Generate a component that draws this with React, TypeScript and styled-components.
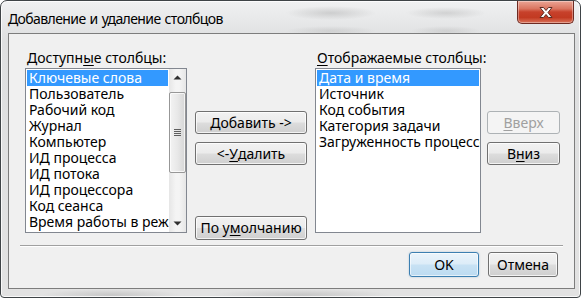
import React from 'react';
import styled, { createGlobalStyle, css } from 'styled-components';

const GlobalStyle = createGlobalStyle`
  html, body {
    margin: 0;
    padding: 0;
    background: #ffffff;
  }
  body {
    font-family: "Noto Sans", "DejaVu Sans", sans-serif;
    color: #000;
  }
`;

const Window = styled.div`
  box-sizing: border-box;
  width: 581px;
  height: 298px;
  border: 1px solid #3f4447;
  border-radius: 7px 7px 4px 4px;
  display: flex;
  flex-direction: column;
  background:
    radial-gradient(ellipse 45px 7px at 330px 12px, rgba(150,150,150,0.35), transparent),
    radial-gradient(ellipse 40px 6px at 445px 12px, rgba(150,150,150,0.3), transparent),
    radial-gradient(ellipse 45px 5px at 330px 30px, rgba(150,150,150,0.25), transparent),
    radial-gradient(ellipse 35px 5px at 445px 30px, rgba(150,150,150,0.25), transparent),
    radial-gradient(ellipse 70px 6px at 110px 294px, rgba(120,120,120,0.25), transparent),
    radial-gradient(ellipse 90px 6px at 300px 294px, rgba(120,120,120,0.25), transparent),
    linear-gradient(#f0f1f2, #dedfe0 40px, #e2e2e2);
  box-shadow: inset 0 0 0 1px rgba(255,255,255,0.8);
`;

const TitleBar = styled.div`
  height: 32px;
  display: flex;
  align-items: flex-start;
  padding-left: 7px;
`;

const Title = styled.div`
  font-size: 14px;
  line-height: 20px;
  padding-top: 8px;
  color: #000;
  letter-spacing: -0.6px;
  word-spacing: 1px;
`;

const CloseButton = styled.div`
  box-sizing: border-box;
  margin-left: auto;
  margin-right: 6px;
  width: 57px;
  height: 23px;
  border: 1px solid #6d2a22;
  border-top: none;
  border-radius: 0 0 5px 5px;
  background: linear-gradient(#eba595 0%, #da7560 35%, #c7412b 50%, #c23a22 75%, #da735a 100%);
  box-shadow: inset 0 0 0 1px rgba(255,255,255,0.35);
  display: flex;
  align-items: center;
  justify-content: center;
`;

const Client = styled.div`
  flex: 1;
  margin: 0 5px 8px 7px;
  border: 1px solid #7d7d7d;
  background: #f0f0f0;
  display: flex;
  flex-direction: column;
  padding: 16px 14px 0 16px;
  font-size: 14px;
`;

const TopRow = styled.div`
  display: flex;
  align-items: flex-start;
`;

const Column = styled.div<{ $width: number; $gap?: number }>`
  width: ${p => p.$width}px;
  margin-left: ${p => p.$gap ?? 0}px;
  display: flex;
  flex-direction: column;
`;

const Label = styled.div`
  line-height: 16px;
  height: 16px;
  margin-bottom: 2px;
  padding-left: 2px;
  white-space: nowrap;
`;

const Key = styled.span`
  text-decoration: underline;
  text-underline-offset: 2px;
  text-decoration-thickness: 1px;
`;

const ListBox = styled.div`
  box-sizing: border-box;
  height: 165px;
  border: 1px solid #828790;
  background: #ffffff;
  display: flex;
  overflow-x: clip;
`;

const Items = styled.div`
  flex: 1;
  min-width: 0;
  padding: 1px;
  overflow-x: clip;
`;

const Item = styled.div<{ $selected?: boolean }>`
  height: 16px;
  line-height: 16px;
  padding-left: 2px;
  white-space: nowrap;
  ${p =>
    p.$selected &&
    css`
      background: #3399ff;
      color: #ffffff;
    `}
`;

const ScrollBar = styled.div`
  width: 17px;
  flex-shrink: 0;
  display: flex;
  flex-direction: column;
  background: linear-gradient(90deg, #e6e6e6, #f4f4f4 40%, #f4f4f4 60%, #e6e6e6);
`;

const Arrow = styled.div<{ $bottom?: boolean }>`
  height: 17px;
  display: flex;
  align-items: center;
  justify-content: center;
  ${p => p.$bottom && css`margin-top: auto;`}
`;

const Thumb = styled.div`
  box-sizing: border-box;
  margin-top: 6px;
  height: 81px;
  border: 1px solid #979797;
  border-radius: 2px;
  background: linear-gradient(90deg, #f3f3f3, #e8e8e8 50%, #d6d6d6);
  box-shadow: inset 0 0 0 1px rgba(255,255,255,0.7);
  display: flex;
  align-items: center;
  justify-content: center;
`;

const Grip = styled.div`
  width: 7px;
  height: 7px;
  background: repeating-linear-gradient(#5f5f5f 0 1px, transparent 1px 2px);
`;

const ButtonStack = styled.div<{ $height?: number }>`
  box-sizing: border-box;
  display: flex;
  flex-direction: column;
  gap: 8px;
  padding-top: 61px;
  ${p => p.$height && css`height: ${p.$height}px;`}
`;

const Button = styled.div<{ $h?: number; $disabled?: boolean; $default?: boolean; $pushDown?: boolean }>`
  box-sizing: border-box;
  height: ${p => p.$h ?? 23}px;
  border: 1px solid #707070;
  border-radius: 3px;
  background: linear-gradient(#f2f2f2 0%, #ebebeb 49%, #dddddd 51%, #cfcfcf 100%);
  box-shadow: inset 0 0 0 1px rgba(255,255,255,0.75);
  display: flex;
  align-items: center;
  justify-content: center;
  white-space: nowrap;
  line-height: 16px;
  ${p => p.$pushDown && css`margin-top: auto;`}
  ${p =>
    p.$default &&
    css`
      border-color: #3c7fb1;
      background: linear-gradient(#eaf4fb 0%, #dcecf8 49%, #c8e2f4 51%, #bcdbf1 100%);
      box-shadow: inset 0 0 0 1px rgba(255,255,255,0.6), 0 0 2px rgba(60,127,177,0.4);
    `}
  ${p =>
    p.$disabled &&
    css`
      border-color: #adb2b5;
      background: #f4f4f4;
      color: #a0a0a0;
      box-shadow: none;
    `}
`;

const Separator = styled.div`
  height: 1px;
  margin: 5px -3px 0 -5px;
  background: #a0a0a0;
  border-bottom: 1px solid #ffffff;
`;

const BottomRow = styled.div`
  display: flex;
  justify-content: flex-end;
  gap: 9px;
  margin-top: 5px;
  padding-right: 2px;
`;

const WideButton = styled(Button)`
  width: 70px;
`;

const available = [
  'Ключевые слова',
  'Пользователь',
  'Рабочий код',
  'Журнал',
  'Компьютер',
  'ИД процесса',
  'ИД потока',
  'ИД процессора',
  'Код сеанса',
  'Время работы в режиме ядра',
];

const shown = ['Дата и время', 'Источник', 'Код события', 'Категория задачи', 'Загруженность процессора'];

function CloseGlyph() {
  return (
    <svg width="16" height="13" viewBox="0 0 16 13">
      <path
        d="M2 1.5 L5.5 1.5 L8 4.5 L10.5 1.5 L14 1.5 L10 6.5 L14 11.5 L10.5 11.5 L8 8.5 L5.5 11.5 L2 11.5 L6 6.5 Z"
        fill="#ffffff"
        stroke="#5a2a22"
        strokeWidth="1"
        strokeLinejoin="round"
      />
    </svg>
  );
}

function UpArrow() {
  return (
    <svg width="9" height="5" viewBox="0 0 9 5">
      <path d="M0.5 4.5 L4.5 0.5 L8.5 4.5 Z" fill="#303030" />
    </svg>
  );
}

function DownArrow() {
  return (
    <svg width="9" height="5" viewBox="0 0 9 5">
      <path d="M0.5 0.5 L4.5 4.5 L8.5 0.5 Z" fill="#303030" />
    </svg>
  );
}

export default function App() {
  return (
    <>
      <GlobalStyle />
      <Window>
        <TitleBar>
          <Title>Добавление и удаление столбцов</Title>
          <CloseButton>
            <CloseGlyph />
          </CloseButton>
        </TitleBar>
        <Client>
          <TopRow>
            <Column $width={162}>
              <Label>
                Доступн<Key>ы</Key>е столбцы:
              </Label>
              <ListBox>
                <Items>
                  {available.map((name, i) => (
                    <Item key={name} $selected={i === 0}>
                      {name}
                    </Item>
                  ))}
                </Items>
                <ScrollBar>
                  <Arrow>
                    <UpArrow />
                  </Arrow>
                  <Thumb>
                    <Grip />
                  </Thumb>
                  <Arrow $bottom>
                    <DownArrow />
                  </Arrow>
                </ScrollBar>
              </ListBox>
            </Column>
            <Column $width={112} $gap={8}>
              <ButtonStack $height={190}>
                <Button>
                  <Key>Д</Key>обавить -&gt;
                </Button>
                <Button>
                  &lt;- <Key>У</Key>далить
                </Button>
                <Button $h={24} $pushDown>
                  По у<Key>м</Key>олчанию
                </Button>
              </ButtonStack>
            </Column>
            <Column $width={166} $gap={8}>
              <Label>
                <Key>О</Key>тображаемые столбцы:
              </Label>
              <ListBox>
                <Items>
                  {shown.map((name, i) => (
                    <Item key={name} $selected={i === 0}>
                      {name}
                    </Item>
                  ))}
                </Items>
              </ListBox>
            </Column>
            <Column $width={73} $gap={6}>
              <ButtonStack>
                <Button $disabled>
                  <Key>В</Key>верх
                </Button>
                <Button>
                  В<Key>н</Key>из
                </Button>
              </ButtonStack>
            </Column>
          </TopRow>
          <Separator />
          <BottomRow>
            <WideButton $h={25} $default>
              OK
            </WideButton>
            <WideButton $h={25}>Отмена</WideButton>
          </BottomRow>
        </Client>
      </Window>
    </>
  );
}
